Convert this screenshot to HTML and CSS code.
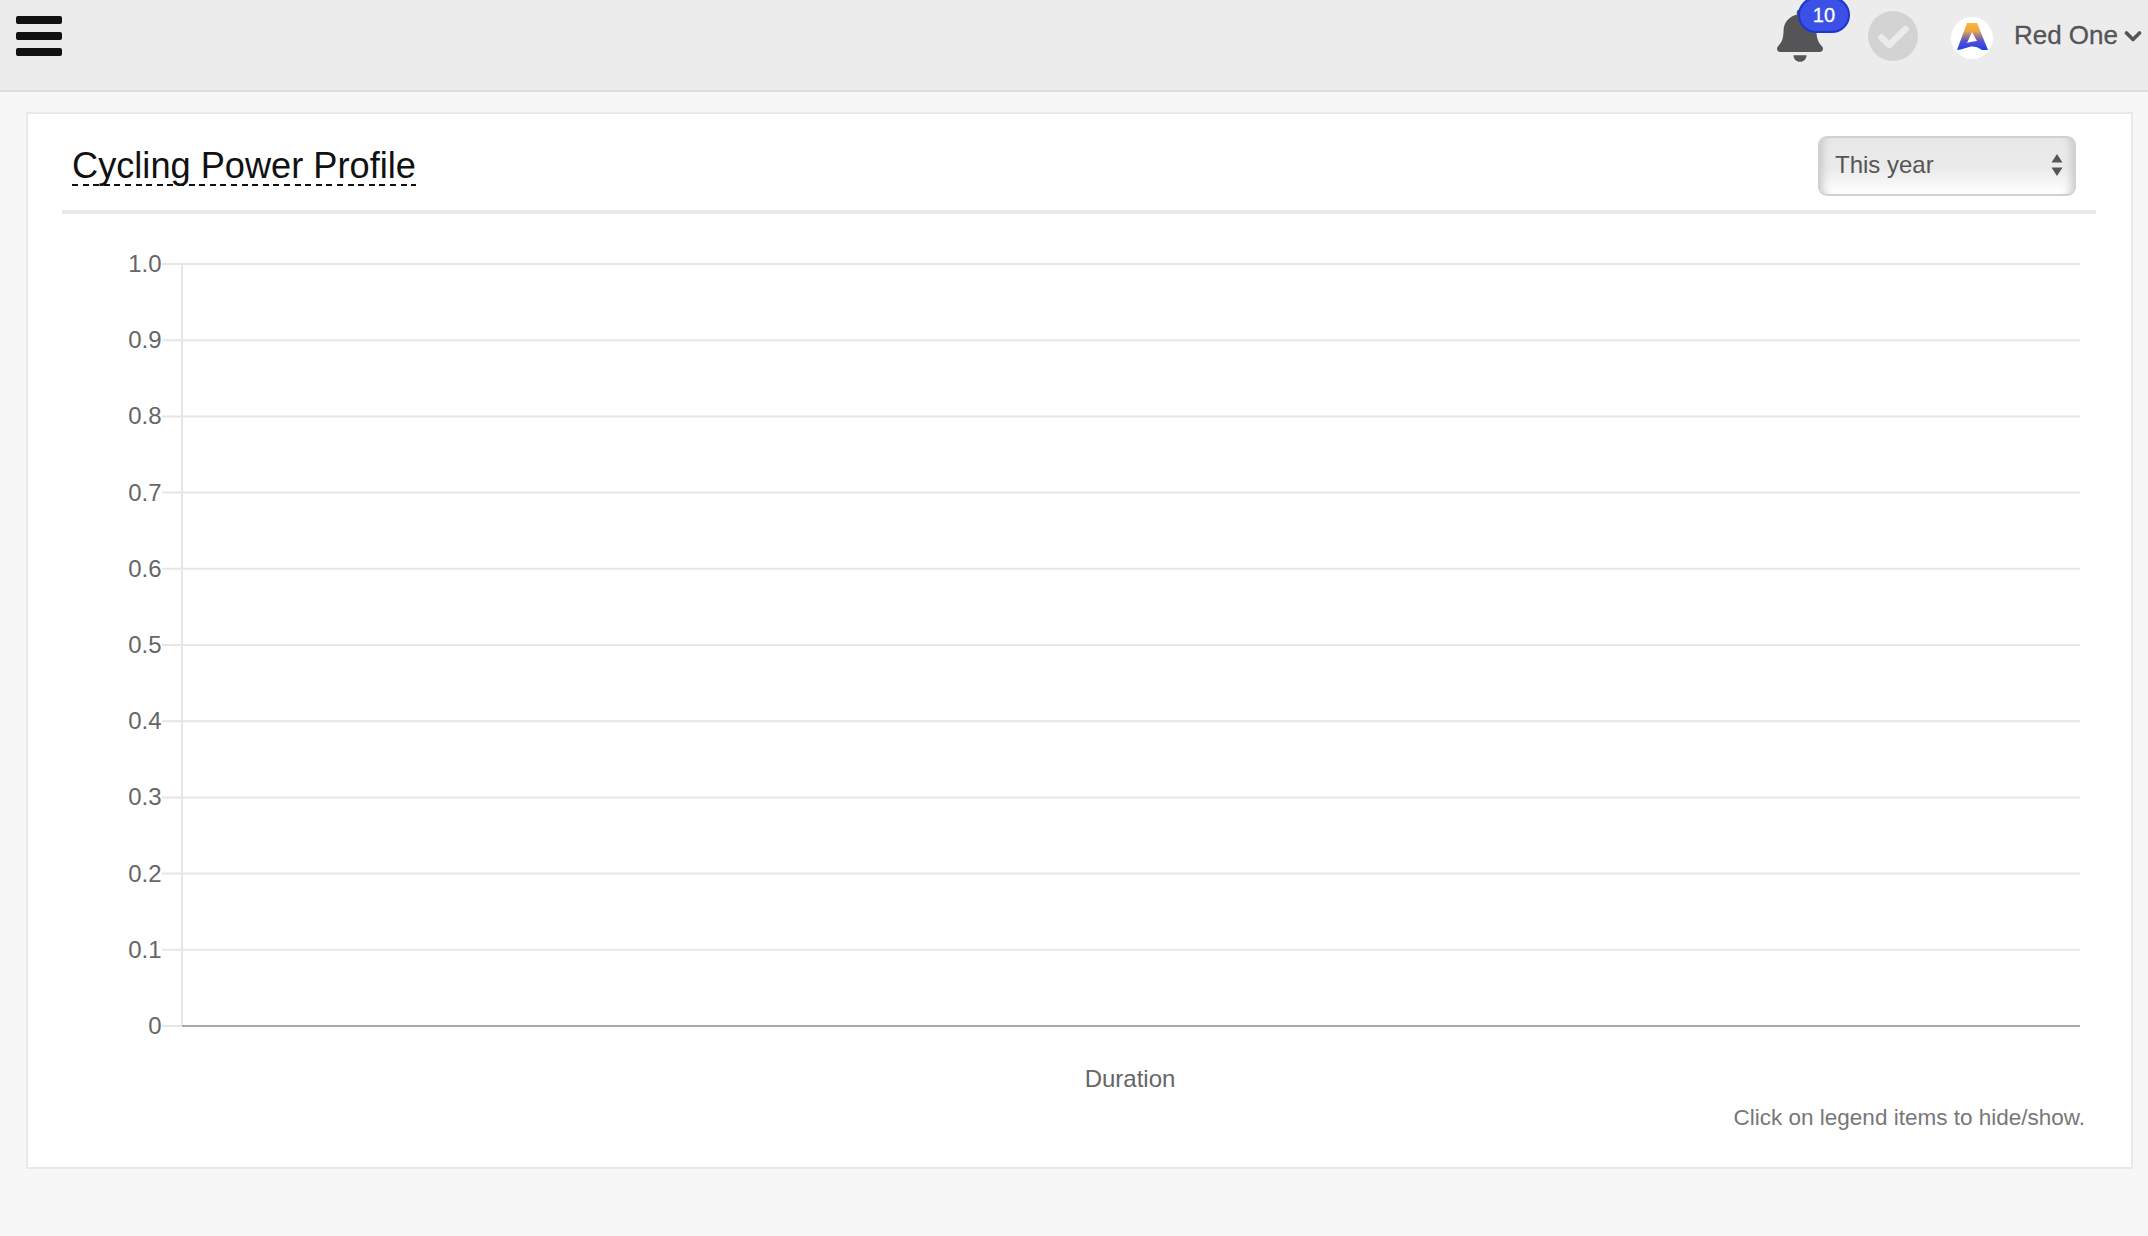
FILE: index.html
```html
<!DOCTYPE html>
<html lang="en">
<head>
<meta charset="utf-8">
<title>Cycling Power Profile</title>
<link rel="stylesheet" href="styles.css">
</head>
<body>
<header class="topbar">
  <button class="burger" aria-label="Menu"><span></span><span></span><span></span></button>
  <div class="topbar-right">
    <div class="bell">
      <svg class="bell-icon" viewBox="0 0 448 512"><path fill="#555558" d="M224 512c35.32 0 63.97-28.65 63.97-64H160.03c0 35.35 28.65 64 63.97 64zm215.39-149.71c-19.32-20.76-55.47-51.99-55.47-154.29 0-77.7-54.48-139.9-127.94-155.16V32c0-17.67-14.32-32-31.98-32s-31.98 14.33-31.98 32v20.84C118.56 68.1 64.08 130.3 64.08 208c0 102.3-36.15 133.53-55.47 154.29-6 6.45-8.66 14.16-8.61 21.71.11 16.4 12.98 32 32.1 32h383.8c19.12 0 32-15.6 32.1-32 .05-7.55-2.61-15.27-8.61-21.71z"/></svg>
      <span class="badge">10</span>
    </div>
    <svg class="check" viewBox="0 0 50 50"><circle cx="25" cy="25" r="25" fill="#d3d3d3"/><path d="M13.500 26.500L21.300 34L37.500 18" fill="none" stroke="#ebebeb" stroke-width="6.500" stroke-linecap="round" stroke-linejoin="round"/></svg>
    <svg class="logo" viewBox="0 0 42 42">
      <defs><linearGradient id="logoGrad" x1="0" y1="0" x2="0" y2="1"><stop offset="0" stop-color="#fdb92e"/><stop offset="0.3" stop-color="#e8a64a"/><stop offset="0.65" stop-color="#5a55c8"/><stop offset="1" stop-color="#1c3cf2"/></linearGradient></defs>
      <circle cx="21" cy="21" r="21" fill="#fff"/>
      <path fill="url(#logoGrad)" fill-rule="evenodd" d="M16 6H26L37 33H31C27 30 23 29 20 29.500C15 30.500 11 32.500 6 33ZM21 15L16 26C19 25 23 24 26 24Z"/>
    </svg>
    <div class="user"><span>Red One</span>
      <svg class="chev" viewBox="0 0 18 12"><path d="M2.500 3l6.500 6.500L15.500 3" fill="none" stroke="#555558" stroke-width="3.600" stroke-linecap="round" stroke-linejoin="round"/></svg>
    </div>
  </div>
</header>
<main class="page">
  <section class="card">
    <div class="card-head">
      <h1 class="title">Cycling Power Profile</h1>
      <div class="select"><span>This year</span>
        <svg class="updown" viewBox="0 0 12 22"><path fill="#555" d="M6 0l5.500 8.500H.5zM6 22L.5 13.500h11z"/></svg>
      </div>
    </div>
    <svg class="chart" width="2034" height="880" viewBox="0 0 2034 880">
      <g class="grid">
        <path d="M100 50H2018M100 126.200H2018M100 202.400H2018M100 278.600H2018M100 354.800H2018M100 431H2018M100 507.200H2018M100 583.400H2018M100 659.600H2018M100 735.800H2018M100 812H120"/>
        <path d="M120 50V812"/>
      </g>
      <path class="axis" d="M120 812H2018"/>
      <g class="ylabels">
        <text x="99.500" y="58">1.0</text>
        <text x="99.500" y="134">0.9</text>
        <text x="99.500" y="210">0.8</text>
        <text x="99.500" y="287">0.7</text>
        <text x="99.500" y="363">0.6</text>
        <text x="99.500" y="439">0.5</text>
        <text x="99.500" y="515">0.4</text>
        <text x="99.500" y="591">0.3</text>
        <text x="99.500" y="668">0.2</text>
        <text x="99.500" y="744">0.1</text>
        <text x="99.500" y="820">0</text>
      </g>
      <text class="xlabel" x="1068" y="873">Duration</text>
    </svg>
    <p class="note">Click on legend items to hide/show.</p>
  </section>
</main>
</body>
</html>
```
FILE: styles.css
```css
* { box-sizing: border-box; }
html, body { margin: 0; height: 100%; }
body {
  background: #f7f7f8;
  font-family: "Liberation Sans", Arial, sans-serif;
  overflow: hidden;
}
.topbar {
  height: 92px;
  background: #ececec;
  border-bottom: 2px solid #dcdde0;
  display: flex;
  justify-content: space-between;
  align-items: flex-start;
}
.burger {
  width: 46px;
  margin: 16px 0 0 16px;
  padding: 0;
  border: 0;
  background: none;
  display: flex;
  flex-direction: column;
  gap: 8px;
}
.burger span {
  display: block;
  height: 8px;
  background: #111;
  border-radius: 2px;
}
.topbar-right {
  display: flex;
  align-items: flex-start;
  margin-right: 6px;
}
.bell {
  position: relative;
  width: 46px;
  height: 54px;
  margin-top: 9px;
}
.bell-icon { display: block; width: 46px; height: 53px; }
.badge {
  position: absolute;
  left: 21px;
  top: -12px;
  width: 52px;
  height: 36px;
  border-radius: 18px;
  background: #3b50e4;
  border: 2px solid #1f35d0;
  color: #fff;
  font-size: 20px;
  line-height: 32px;
  text-align: center;
  -webkit-text-stroke: 0.3px #fff;
}
.check { width: 50px; height: 50px; margin: 11px 0 0 45px; }
.logo { width: 42px; height: 42px; margin: 17px 0 0 33px; }
.user {
  display: flex;
  align-items: center;
  margin: 20px 0 0 21px;
  font-size: 26px;
  line-height: 30px;
  font-weight: 400;
  color: #555558;
  -webkit-text-stroke: 0.3px #555558;
}
.chev { width: 18px; height: 12px; margin-left: 6px; margin-top: 2px; }
.page { padding: 20px 15px 0 26px; }
.card {
  height: 1057px;
  background: #fff;
  border: 2px solid #e8e8ed;
  padding: 0 35px 0 34px;
}
.card-head {
  height: 100px;
  border-bottom: 4px solid #e8e9ec;
  padding: 22px 20px 0 10px;
  display: flex;
  justify-content: space-between;
  align-items: flex-start;
}
.title {
  margin: 11px 0 0;
  padding-bottom: 1px;
  font-size: 36.200px;
  font-weight: 400;
  line-height: 38px;
  color: #111;
  background: repeating-linear-gradient(90deg, #111 0 6px, transparent 6px 10.6px) left bottom / 100% 2px no-repeat;
}
.select {
  width: 258px;
  height: 60px;
  border: 2px solid #cfd1da;
  border-radius: 9px;
  background: linear-gradient(#e8e8e8 0, #ebebeb 55%, #fff 100%);
  box-shadow: inset 10px 0 8px -8px #c4c4c4, inset -10px 0 8px -8px #c4c4c4;
  display: flex;
  align-items: center;
  justify-content: space-between;
  padding: 0 11px 2px 15px;
  font-size: 24px;
  color: #555;
}
.updown { width: 12px; height: 22px; }
.chart { display: block; }
.grid path { fill: none; stroke: #e6e6e6; stroke-width: 2; }
.axis { fill: none; stroke: #a8a8a8; stroke-width: 2; }
.ylabels text {
  font-size: 24px;
  fill: #666;
  text-anchor: end;
}
.xlabel {
  font-size: 24px;
  fill: #666;
  text-anchor: middle;
}
.note {
  margin: 11px 0 0;
  padding-right: 11px;
  font-size: 22.500px;
  line-height: 26px;
  color: #777;
  text-align: right;
}
```
